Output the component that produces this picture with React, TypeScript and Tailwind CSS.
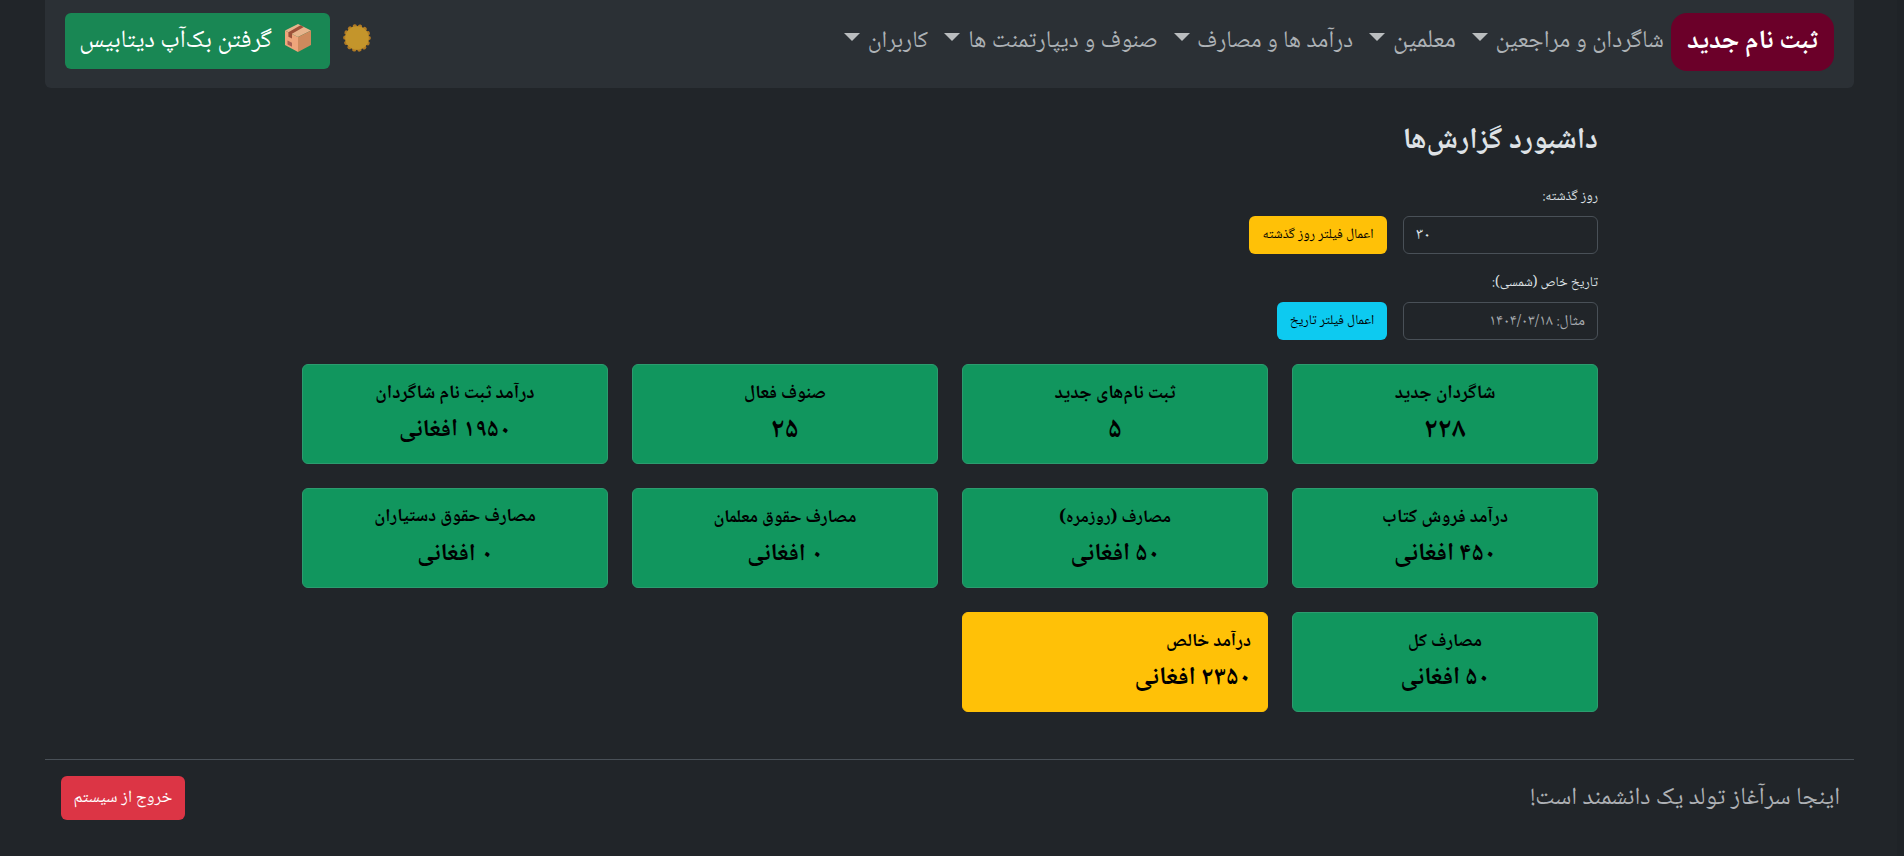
import { clsx } from "clsx";

type NavItem = {
  label: string;
  className: string;
};

type Stat = {
  title: string;
  value: string;
  titleClass: string;
  valueClass: string;
  highlight?: boolean;
};

const navItems: NavItem[] = [
  { label: "شاگردان و مراجعین", className: "w-[168px] text-[24.2px]" },
  { label: "معلمین", className: "w-[63px] text-[25.5px]" },
  { label: "درآمد ها و مصارف", className: "w-[155px] text-[23.7px]" },
  { label: "صنوف و دیپارتمنت ها", className: "w-[190px] text-2xl" },
  { label: "کاربران", className: "w-[60px] text-[23.6px]" },
];

const stats: Stat[] = [
  { title: "شاگردان جدید", value: "۲۲۸", titleClass: "text-[18.9px]", valueClass: "text-[28px]" },
  { title: "ثبت نام‌های جدید", value: "۵", titleClass: "text-[19px]", valueClass: "text-[28px]" },
  { title: "صنوف فعال", value: "۲۵", titleClass: "text-[18.6px]", valueClass: "text-[28px]" },
  { title: "درآمد ثبت نام شاگردان", value: "۱۹۵۰ افغانی", titleClass: "text-[19px]", valueClass: "text-[24.4px]" },
  { title: "درآمد فروش کتاب", value: "۴۵۰ افغانی", titleClass: "text-[18.6px]", valueClass: "text-[24.9px]" },
  { title: "مصارف (روزمره)", value: "۵۰ افغانی", titleClass: "text-[17.5px]", valueClass: "text-[24.7px]" },
  { title: "مصارف حقوق معلمان", value: "۰ افغانی", titleClass: "text-[18px]", valueClass: "text-[24.2px]" },
  { title: "مصارف حقوق دستیاران", value: "۰ افغانی", titleClass: "text-[18.2px]", valueClass: "text-[24.2px]" },
  { title: "مصارف کل", value: "۵۰ افغانی", titleClass: "text-[18px]", valueClass: "text-[24.7px]" },
  { title: "درآمد خالص", value: "۲۳۵۰ افغانی", titleClass: "text-[18.4px]", valueClass: "text-[25.4px]", highlight: true },
];

function BoxIcon() {
  return (
    <svg width="28" height="30" viewBox="0 0 28 30">
      <path d="M14 1 27 7.5 14 14 1 7.5Z" fill="#e8b48c" />
      <path d="M1 7.5 14 14V29L1 22Z" fill="#eea57b" />
      <path d="M27 7.5 14 14V29l13-7Z" fill="#cf8a5d" />
      <path d="M16.5 2.2 19.8 4 8 10.8v4.7l-3.6-1.8V9.2Z" fill="#9c5139" />
      <path d="M3.5 17.5 8 19.8v4L3.5 21.5Z" fill="#a85f50" />
    </svg>
  );
}

function SunIcon() {
  return (
    <svg width="28" height="30" viewBox="0 0 28 30">
      <circle
        cx="14"
        cy="15"
        r="11.8"
        fill="#b98526"
        stroke="#b07a24"
        strokeWidth="4.2"
        strokeLinecap="round"
        strokeDasharray="0.1 5.196"
      />
      <circle cx="14" cy="15" r="11.8" fill="#c4952b" />
    </svg>
  );
}

function StatCard({ stat }: { stat: Stat }) {
  return (
    <div
      className={clsx(
        "flex h-[100px] flex-col rounded-md border px-4 pt-[13px] text-black",
        stat.highlight
          ? "items-start border-[#ffc107] bg-[#ffc107]"
          : "items-center border-[#2c9c6f] bg-[#11965e]",
      )}
    >
      <h5 className={clsx("h-[33px] leading-8 font-bold whitespace-nowrap", stat.titleClass)}>
        {stat.title}
      </h5>
      <p className={clsx("h-10 leading-10 font-bold whitespace-nowrap", stat.valueClass)}>
        {stat.value}
      </p>
    </div>
  );
}

export default function App() {
  return (
    <div
      dir="rtl"
      className="h-[856px] overflow-hidden border-r-[7px] border-[#1f2327] bg-[#212529] pr-[43px] pl-[45px] font-['Noto_Naskh_Arabic','DejaVu_Sans',sans-serif] text-[#dee2e6]"
    >
      <header className="flex h-[88px] items-start justify-between rounded-b-md bg-[#2b3035] pt-[13px] pr-5 pl-5">
        <nav className="flex h-[58px] items-center">
          <a className="ml-[7px] flex h-[58px] w-[163px] items-center justify-center rounded-2xl bg-[#6b0029] pt-0.5 text-[26.6px] font-bold whitespace-nowrap text-white">
            ثبت نام جدید
          </a>
          <ul className="flex gap-4">
            {navItems.map((item) => (
              <li key={item.label} className="flex h-[58px] items-center gap-2 leading-[58px] text-[#adb2b6]">
                <span className={clsx("whitespace-nowrap", item.className)}>{item.label}</span>
                <span className="mb-[10px] h-0 w-0 border-x-8 border-t-8 border-x-transparent border-t-[#babdbf]" />
              </li>
            ))}
          </ul>
        </nav>
        <div className="flex items-start gap-[13px]">
          <div className="pt-[10px]">
            <SunIcon />
          </div>
          <button className="flex h-14 w-[265px] items-center gap-3 rounded-md bg-[#198754] pt-0.5 pr-[18px] text-[25px] whitespace-nowrap text-white">
            <span className="pb-2">
              <BoxIcon />
            </span>
            گرفتن بک‌آپ دیتابیس
          </button>
        </div>
      </header>

      <main className="mr-[256px] w-[1296px] pt-[30px]">
        <h2 className="h-12 text-[29.6px] leading-[48px] font-bold">داشبورد گزارش‌ها</h2>

        <div className="mt-[19px]">
          <label className="block h-6 text-[13.8px] leading-6">روز گذشته:</label>
          <div className="mt-[7px] flex gap-4">
            <input
              defaultValue="۳۰"
              className="h-[38px] w-[195px] rounded-md border border-[#495057] bg-[#212529] px-3 text-left text-base"
            />
            <button className="h-[38px] w-[138px] rounded-md bg-[#ffc107] pt-px text-[13.8px] whitespace-nowrap text-black">
              اعمال فیلتر روز گذشته
            </button>
          </div>
        </div>
        <div className="mt-[17px]">
          <label className="block h-6 text-[13.7px] leading-6">تاریخ خاص (شمسی):</label>
          <div className="mt-[7px] flex gap-4">
            <input
              placeholder="مثال: ۱۴۰۴/۰۳/۱۸"
              className="h-[38px] w-[195px] rounded-md border border-[#495057] bg-[#212529] px-3 pt-0.5 text-[15.3px] placeholder:text-[#a7abaf]"
            />
            <button className="h-[38px] w-[110px] rounded-md bg-[#0dcaf0] pt-px text-[13.6px] whitespace-nowrap text-black">
              اعمال فیلتر تاریخ
            </button>
          </div>
        </div>

        <section className="mt-6 grid grid-cols-4 gap-6">
          {stats.map((stat) => (
            <StatCard key={stat.title} stat={stat} />
          ))}
        </section>
      </main>

      <footer className="mt-[47px] flex items-start justify-between border-t border-[#495057] pt-4 pr-[14px] pl-4">
        <p className="h-11 pt-px text-[24.5px] leading-[44px] whitespace-nowrap text-[#aeb1b5]">
          اینجا سرآغاز تولد یک دانشمند است!
        </p>
        <button className="h-11 w-[124px] rounded-md bg-[#dc3545] pt-px text-[17.1px] whitespace-nowrap text-white">
          خروج از سیستم
        </button>
      </footer>
    </div>
  );
}
